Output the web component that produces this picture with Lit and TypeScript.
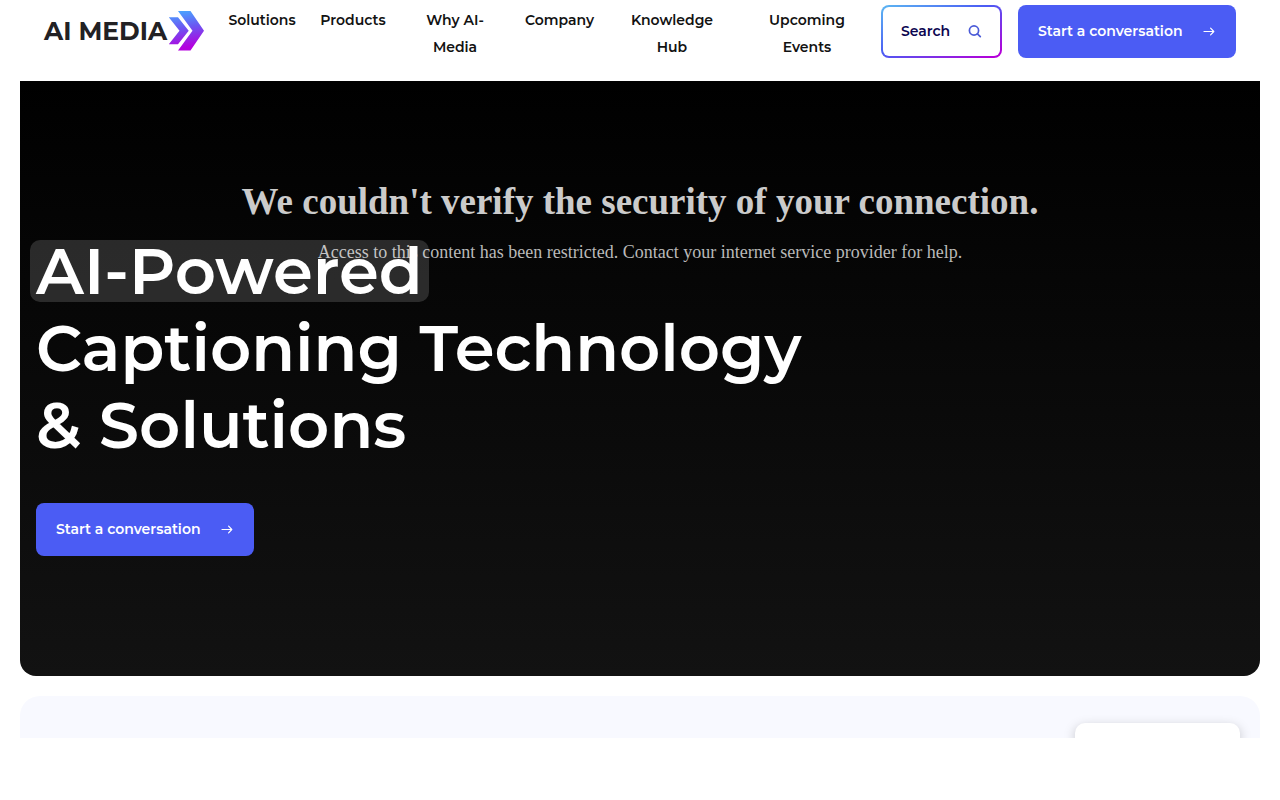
import { LitElement, html, css, svg } from "lit";
import { customElement } from "lit/decorators.js";

const arrow = svg`<svg viewBox="0 0 14 10" width="14" height="10" fill="none" stroke="currentColor" stroke-width="1.2" stroke-linecap="round" stroke-linejoin="round" aria-hidden="true"><path d="M2 5.500h9.700M8.600 2.200l3.200 3.300-3.200 3.300" /></svg>`;

@customElement("app-root")
export class AppRoot extends LitElement {
  static styles = css`
    :host {
      display: block;
      background: #fff;
      color: #121212;
      font-family: Montserrat, Inter, sans-serif;
      font-size: 14px;
      font-weight: 600;
    }
    * { box-sizing: border-box; }
    a { color: inherit; text-decoration: none; }
    .header {
      display: flex;
      align-items: flex-start;
      padding: 5px 44px 20px;
    }
    .logo {
      display: flex;
      flex: none;
      align-items: center;
      justify-content: space-between;
      width: 160px;
      height: 52px;
      color: #222124;
      font-size: 25px;
      font-weight: 700;
      white-space: nowrap;
    }
    .nav {
      flex: 1;
      display: grid;
      grid-template-columns: 68fr 66fr 90fr 71fr 106fr 116fr;
      column-gap: 24px;
      margin: 2px 16px 0 24px;
      line-height: 27px;
      text-align: center;
    }
    .actions { display: flex; flex: none; gap: 16px; }
    .button {
      display: inline-flex;
      align-items: center;
      justify-content: space-between;
      height: 53px;
      padding: 0 20px 2px;
      border: 0;
      border-radius: 8px;
      font: inherit;
      white-space: nowrap;
    }
    .primary { width: 218px; color: #fff; background: #4b5cf4; }
    .search {
      width: 121px;
      padding: 0 18px 2px;
      border: 2px solid transparent;
      color: #0b0550;
      background:
        linear-gradient(#fff, #fff) padding-box,
        linear-gradient(155deg, #5cb8f2 0%, #4b5cf4 45%, #b400d8 95%) border-box;
    }
    .hero {
      display: grid;
      margin: 0 20px;
      min-height: 595px;
      border-radius: 0 0 16px 16px;
      background: linear-gradient(#000, #121212);
      overflow: hidden;
    }
    .notice, .intro { grid-area: 1 / 1; }
    .notice {
      padding-top: 97px;
      font-family: "Liberation Serif", serif;
      text-align: center;
    }
    .notice-title {
      margin: 0;
      color: #cbcbcb;
      font-size: 37px;
      font-weight: 700;
      line-height: 48px;
    }
    .notice-text {
      margin: 14px 0 0;
      color: #b9b9b9;
      font-size: 18px;
      font-weight: 400;
      line-height: 24px;
    }
    .intro {
      z-index: 1;
      align-self: start;
      padding: 152px 16px 0;
      color: #fff;
    }
    .title {
      max-width: 800px;
      margin: 0 0 39px;
      font-size: 64px;
      font-weight: 600;
      line-height: 77px;
    }
    .mark {
      display: inline-block;
      margin-left: -6px;
      padding: 0 6px;
      border-radius: 10px;
      background: rgba(255, 255, 255, 0.15);
      line-height: 62px;
    }
    .band {
      display: flex;
      justify-content: flex-end;
      margin: 20px 20px 0;
      padding: 27px 20px 0;
      border-radius: 20px 20px 0 0;
      background: #f8f9ff;
      overflow: hidden;
    }
    .card {
      width: 165px;
      height: 15px;
      border-radius: 10px 10px 0 0;
      background: #fff;
      box-shadow: 0 4px 12px rgba(0, 0, 0, 0.25);
    }
  `;

  render() {
    return html`
      <header class="header">
        <a class="logo" href="#" aria-label="AI Media">
          <span>AI MEDIA</span>
          <svg width="36" height="40" viewBox="0 0 36 40" aria-hidden="true">
            <defs>
              <linearGradient id="brand" gradientUnits="userSpaceOnUse" x1="14" y1="0" x2="20" y2="40">
                <stop offset="0" stop-color="#4aa3ff" />
                <stop offset="0.4" stop-color="#6a58f2" />
                <stop offset="0.9" stop-color="#b400de" />
              </linearGradient>
            </defs>
            <path fill="url(#brand)" d="M10 0h12.500L36 19.700 22.500 39.500H10L24.500 19.700zM.8 6.300H10l10.700 13.400L10 33.200H.8l10.700-13.500z" />
          </svg>
        </a>
        <nav class="nav">
          <a href="#">Solutions</a>
          <a href="#">Products</a>
          <a href="#">Why AI-<br />Media</a>
          <a href="#">Company</a>
          <a href="#">Knowledge<br />Hub</a>
          <a href="#">Upcoming<br />Events</a>
        </nav>
        <div class="actions">
          <button class="button search">
            Search
            <svg width="14" height="14" viewBox="0 0 14 14" fill="none" stroke="#4b5bd8" stroke-width="1.700" stroke-linecap="round" aria-hidden="true">
              <circle cx="6" cy="6.500" r="4.600" /><path d="m9.400 9.900 2.900 2.800" />
            </svg>
          </button>
          <a class="button primary" href="#">Start a conversation ${arrow}</a>
        </div>
      </header>
      <main>
        <section class="hero">
          <div class="notice">
            <h2 class="notice-title">We couldn't verify the security of your connection.</h2>
            <p class="notice-text">Access to this content has been restricted. Contact your internet service provider for help.</p>
          </div>
          <div class="intro">
            <h1 class="title"><span class="mark">AI-Powered</span><br />Captioning Technology<br />&amp; Solutions</h1>
            <a class="button primary" href="#">Start a conversation ${arrow}</a>
          </div>
        </section>
        <section class="band"><div class="card"></div></section>
      </main>
    `;
  }
}
